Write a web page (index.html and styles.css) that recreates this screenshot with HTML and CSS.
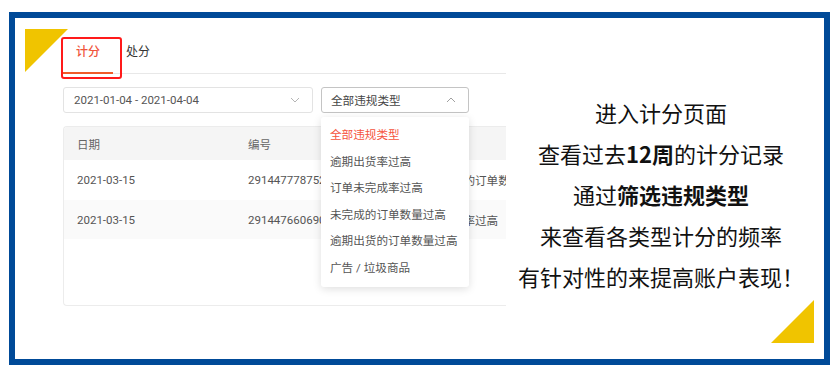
FILE: index.html
```html
<!DOCTYPE html>
<html lang="zh-CN">
<head>
<meta charset="utf-8">
<link rel="stylesheet" href="styles.css">
</head>
<body>
<div class="frame">
  <div class="tri tri-tl"></div>
  <div class="tri tri-br"></div>
  <section class="shot">
    <div class="tabs">
      <div class="tab active">计分</div>
      <div class="tab">处分</div>
    </div>
    <div class="filters">
      <div class="input date">
        <span>2021-01-04 - 2021-04-04</span>
        <svg class="chev" width="10" height="6" viewBox="0 0 10 6"><path d="M1 1 L5 5 L9 1" fill="none" stroke="#b5b5b5" stroke-width="1"/></svg>
      </div>
      <div class="select-wrap">
        <div class="input select">
          <span>全部违规类型</span>
          <svg class="chev" width="10" height="6" viewBox="0 0 10 6"><path d="M1 5 L5 1 L9 5" fill="none" stroke="#a0a0a0" stroke-width="1"/></svg>
        </div>
        <ul class="menu">
          <li class="sel">全部违规类型</li>
          <li>逾期出货率过高</li>
          <li>订单未完成率过高</li>
          <li>未完成的订单数量过高</li>
          <li>逾期出货的订单数量过高</li>
          <li>广告 / 垃圾商品</li>
        </ul>
      </div>
    </div>
    <div class="table">
      <div class="row head">
        <div class="cell">日期</div>
        <div class="cell">编号</div>
        <div class="cell">违规类型</div>
      </div>
      <div class="row">
        <div class="cell">2021-03-15</div>
        <div class="cell">2914477787523681</div>
        <div class="cell">逾期出货的订单数量过高</div>
      </div>
      <div class="row alt">
        <div class="cell">2021-03-15</div>
        <div class="cell">2914476606905231</div>
        <div class="cell">逾期出货率过高</div>
      </div>
    </div>
  </section>
  <section class="note">
    <p>进入计分页面</p>
    <p>查看过去<b>12周</b>的计分记录</p>
    <p>通过<b>筛选违规类型</b></p>
    <p>来查看各类型计分的频率</p>
    <p>有针对性的来提高账户表现！</p>
  </section>
</div>
</body>
</html>
```

FILE: styles.css
```css
* { box-sizing: border-box; }
html, body { margin: 0; padding: 0; background: #fff; }
body { width: 840px; height: 371px; overflow: hidden; }

.frame {
  position: relative;
  margin: 12px 0 0 9px;
  width: 821px;
  height: 353px;
  border: 6px solid #004a98;
  display: flex;
  font-family: Roboto, "Noto Sans CJK SC", sans-serif;
}

.tri { position: absolute; width: 0; height: 0; }
.tri-tl {
  left: 10px; top: 11px;
  border-top: 43px solid #f0c400;
  border-right: 43px solid transparent;
}
.tri-br {
  right: 10px; bottom: 16px;
  border-bottom: 43px solid #f0c400;
  border-left: 43px solid transparent;
}

.shot {
  width: 491px;
  padding: 19px 0 0 48px;
  font-size: 11.5px;
  color: #555;
}

.tabs {
  display: flex;
  height: 37px;
  border-bottom: 1px solid #e8e8e8;
}
.tab {
  position: relative;
  height: 37px;
  padding: 7px 0 0 0;
  line-height: 17px;
  font-size: 12px;
  color: #333;
}
.tab.active {
  width: 50px;
  text-align: center;
  color: #f0553c;
  font-weight: 500;
  border-bottom: 2px solid #f05a2a;
  margin-right: 13px;
}
.tab.active::after {
  content: "";
  position: absolute;
  left: -2px; top: 0;
  width: 57px; height: 38px;
  border: 2px solid #ff1a1a;
  border-radius: 3px;
}

.filters {
  display: flex;
  gap: 8px;
  margin-top: 13px;
  height: 26px;
}
.input {
  height: 26px;
  border: 1px solid #e3e3e3;
  border-radius: 3px;
  display: flex;
  align-items: center;
  justify-content: space-between;
  padding: 0 12px 0 10px;
  color: #555;
}
.date { width: 250px; }
.select-wrap { position: relative; width: 148px; }
.select {
  width: 148px;
  border-color: #c4c4c4;
  padding-left: 9px;
  font-size: 11.6px;
  color: #444;
}
.chev { display: block; }

.menu {
  position: absolute;
  z-index: 2;
  left: 0; top: 30px;
  width: 148px;
  margin: 0;
  padding: 5px 0 6px;
  list-style: none;
  background: #fff;
  border-radius: 3px;
  box-shadow: 0 2px 8px rgba(0,0,0,0.13);
}
.menu li {
  height: 26.5px;
  line-height: 26.5px;
  padding-left: 9px;
  font-size: 11.6px;
  color: #555;
  white-space: nowrap;
}
.menu li.sel { color: #f5533d; }

.table {
  margin-top: 13px;
  height: 180px;
  border: 1px solid #ececec;
  border-right: none;
  border-radius: 4px 0 0 4px;
  overflow: hidden;
}
.row {
  display: grid;
  grid-template-columns: 171px 169px 1fr;
  height: 40px;
  align-items: center;
  white-space: nowrap;
}
.row.head { height: 33px; background: #f5f5f5; color: #666; }
.row.alt { height: 39px; background: #fafafa; }
.cell { padding-left: 13px; overflow: hidden; }
.row .cell:nth-child(3) { font-size: 11.6px; }

.note {
  flex: 1;
  padding: 74px 8px 0 0;
  display: flex;
  flex-direction: column;
  align-items: center;
  font-family: "Noto Sans CJK SC", sans-serif;
  font-size: 22px;
  color: #111;
}
.note p { margin: 0; height: 41px; line-height: 41px; white-space: nowrap; }
.note b { font-weight: 700; }
```
